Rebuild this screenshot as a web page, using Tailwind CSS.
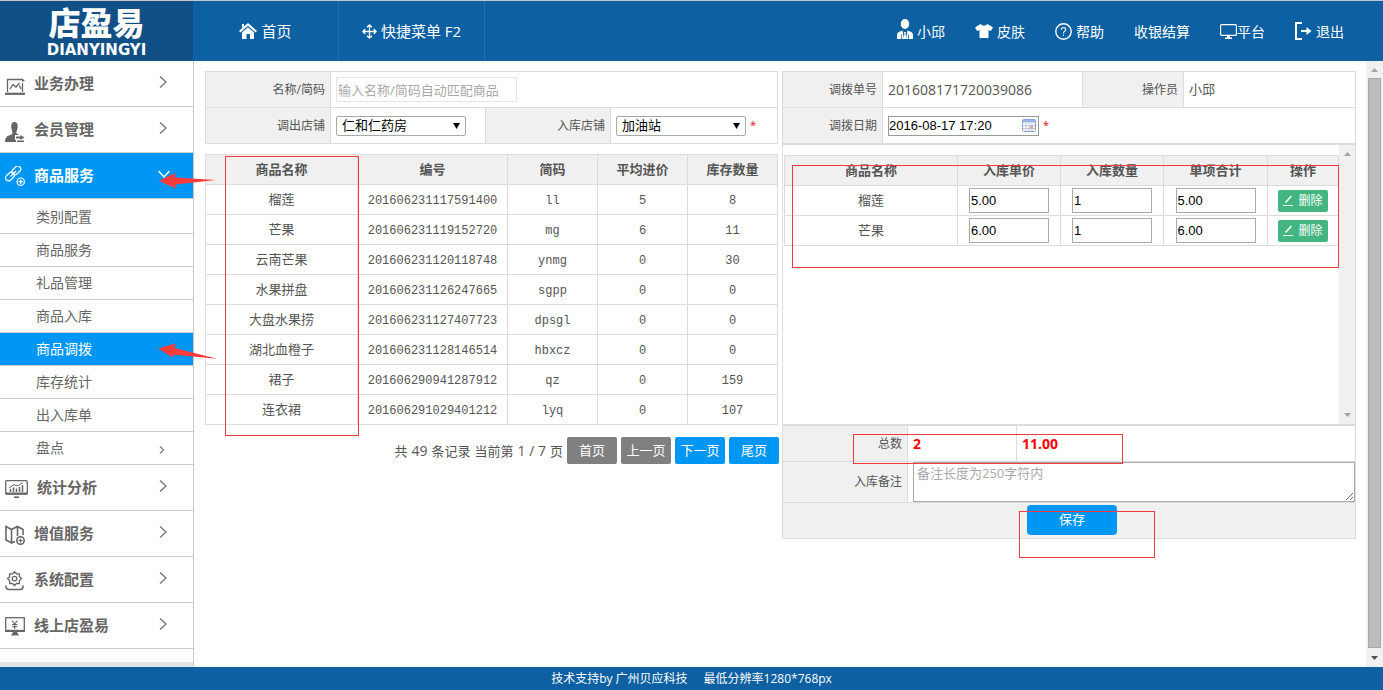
<!DOCTYPE html>
<html lang="zh-CN">
<head>
<meta charset="utf-8">
<title>店盈易 - 商品调拨</title>
<script src="https://cdn.jsdelivr.net/npm/@tailwindcss/browser@4"></script>
</head>
<body class="relative flex h-screen flex-col overflow-hidden bg-white font-['Open_Sans','Noto_Sans_CJK_SC',sans-serif] text-[13px] text-[#555]">

<header class="flex h-[61px] shrink-0 border-t border-[#c4c8cc] bg-[#0d60a1] text-white">
  <a href="#" class="flex w-[193px] shrink-0 flex-col items-center justify-between bg-[#105087] pt-1 pb-1">
    <span class="text-[32px] leading-[36px] font-black">店盈易</span>
    <span class="font-['DejaVu_Sans'] text-[15px] leading-[14px] font-bold">DIANYINGYI</span>
  </a>
  <nav class="flex text-[15px]">
    <a href="#" class="flex w-[146px] items-center justify-center gap-1 border-r border-[#2a70ad]">
      <svg class="h-[17px] w-[18px]" viewBox="0 0 18 17" fill="#fff"><path d="M9 0 L18 8 L16.6 9.4 L9 2.8 L1.4 9.4 L0 8 L3 5.3 V1 H5 V3.6 Z"/><path d="M9 4.2 L15 9.4 V16 H11 V11 H7.500 V16 H3 V9.400 Z"/></svg>
      <span>首页</span>
    </a>
    <a href="#" class="flex w-[146px] items-center justify-center gap-1 border-r border-[#2a70ad]">
      <svg class="size-[15px]" viewBox="0 0 15 15" fill="none" stroke="#fff" stroke-width="1.3"><path d="M7.500 1V14M1 7.500H14M5 3.300L7.500 .9L10 3.300M5 11.700L7.500 14.100L10 11.700M3.300 5L.9 7.500L3.300 10M11.700 5L14.100 7.500L11.700 10"/></svg>
      <span>快捷菜单 F2</span>
    </a>
  </nav>
  <nav class="ml-auto flex items-center gap-[30px] pr-[39px] text-[14px]">
    <a href="#" class="flex items-center gap-1">
      <svg class="mb-1 h-5 w-4" viewBox="0 0 16 20" fill="#fff"><ellipse cx="8" cy="5" rx="4.200" ry="5"/><path d="M0 20V16Q0 13.500 3 12.500L5.500 11.500L7 20ZM16 20V16Q16 13.500 13 12.500L10.500 11.500L9 20Z"/><path d="M7 13H9L8.600 14.500L9.300 20H6.700L7.400 14.500Z"/><path d="M4.600 15.500V20M11.400 15.500V20" stroke="#0d60a1" stroke-width=".8"/></svg>
      <span>小邱</span>
    </a>
    <a href="#" class="flex items-center gap-1">
      <svg class="h-[14px] w-[18px]" viewBox="0 0 18 14" fill="#fff"><path d="M5.500 0Q9 3.500 12.500 0L18 3.500L15.800 7L13.500 6V14H4.500V6L2.200 7L0 3.500Z"/></svg>
      <span>皮肤</span>
    </a>
    <a href="#" class="flex items-center gap-1">
      <svg class="size-[17px]" viewBox="0 0 17 17" fill="none" stroke="#fff"><circle cx="8.500" cy="8.500" r="7.700" stroke-width="1.400"/><path d="M6.300 6.800Q6.300 4.500 8.500 4.500T10.700 6.600Q10.700 7.800 9.500 8.400T8.500 10.300M8.500 11.600V12.900" stroke-width="1.100"/></svg>
      <span>帮助</span>
    </a>
    <a href="#">收银结算</a>
    <a href="#" class="flex items-center">
      <svg class="h-[15px] w-[17px]" viewBox="0 0 17 15"><rect x=".6" y=".6" width="15.800" height="10.800" rx="1" fill="none" stroke="#fff" stroke-width="1.200"/><path d="M7 12H10V13.500H12V15H5V13.500H7Z" fill="#fff"/></svg>
      <span>平台</span>
    </a>
    <a href="#" class="flex items-center gap-1">
      <svg class="h-[18px] w-[17px]" viewBox="0 0 17 18" fill="none" stroke="#fff" stroke-width="2"><path d="M7 1H1V17H7"/><path d="M6 9H15"/><path d="M11.500 5L16.500 9L11.500 13Z" fill="#fff" stroke="none"/></svg>
      <span>退出</span>
    </a>
  </nav>
</header>

<div class="flex min-h-0 flex-1">
  <aside class="flex w-[194px] shrink-0 flex-col border-r border-[#c8c8c8]">
    <nav class="text-[15px] font-bold text-[#666]">
      <a href="#" class="flex h-[46px] items-center gap-[9px] border-b border-[#ccc] pr-[26px] pl-[5px]">
        <svg class="mt-1 size-5 shrink-0" viewBox="0 0 20 20" fill="none" stroke="#666" stroke-width="1.300"><path d="M2.500 16V3.500H18M17.500 7V16"/><path d="M0 17.800H20" stroke-width="2.200"/><path d="M5 13L8 8.500L11 11L14.500 7M14.500 9.500L16 13"/><path d="M17 2.500L20 4.500L17 6Z" fill="#666" stroke="none"/></svg>
        <span>业务办理</span>
        <svg class="mb-1 ml-auto h-3 w-2" viewBox="0 0 8 12" fill="none" stroke="#777" stroke-width="1.400"><path d="M1 0.500L7 6L1 11.500"/></svg>
      </a>
      <a href="#" class="flex h-[46px] items-center gap-[9px] border-b border-[#ccc] pr-[26px] pl-[5px]">
        <svg class="mt-1 size-5 shrink-0" viewBox="0 0 20 20" fill="#666"><path d="M9.500 0C12 0 13 2 12.700 5C12.500 7.500 11.500 9 11.300 11Q12 12.300 15 13H10V18H11V20H0Q0 14.500 4 13.500Q7.200 12.500 7.500 11C7.300 9 6.500 7.500 6.200 5C6 2 7 0 9.500 0Z"/><path d="M11 14.500H15.500V13L19.500 15.500L15.500 18V16.500H11ZM12 18.500H19V20H12Z"/></svg>
        <span>会员管理</span>
        <svg class="mb-1 ml-auto h-3 w-2" viewBox="0 0 8 12" fill="none" stroke="#777" stroke-width="1.400"><path d="M1 0.500L7 6L1 11.500"/></svg>
      </a>
      <a href="#" class="flex h-[46px] items-center gap-[9px] border-b border-[#ccc] bg-[#0096f3] pr-[23px] pl-[5px] text-white">
        <svg class="size-5 shrink-0" viewBox="0 0 20 20" fill="none" stroke="#fff" stroke-width="1.200"><rect x="6.300" y="1.500" width="10" height="6" rx="3" transform="rotate(-45 11.300 4.500)"/><rect x="0" y="7.500" width="10" height="6" rx="3" transform="rotate(-45 5 10.500)"/><path d="M5.500 10.500L11 5"/><circle cx="15.700" cy="15.700" r="3.700"/><path d="M15.700 13.500V18M13.500 15.700H18"/></svg>
        <span>商品服务</span>
        <svg class="mb-1 ml-auto h-2 w-3" viewBox="0 0 12 8" fill="none" stroke="#fff" stroke-width="1.400"><path d="M0.500 1L6 7L11.500 1"/></svg>
      </a>
      <div class="pt-0.5 text-[14px] font-normal">
        <a href="#" class="flex h-[33px] items-center border-b border-[#ccc] pb-0.5 pl-9">类别配置</a>
        <a href="#" class="flex h-[33px] items-center border-b border-[#ccc] pb-0.5 pl-9">商品服务</a>
        <a href="#" class="flex h-[33px] items-center border-b border-[#ccc] pb-0.5 pl-9">礼品管理</a>
        <a href="#" class="flex h-[33px] items-center border-b border-[#ccc] pb-0.5 pl-9">商品入库</a>
        <a href="#" class="flex h-[33px] items-center border-b border-[#ccc] bg-[#0096f3] pb-0.5 pl-9 text-white">商品调拨</a>
        <a href="#" class="flex h-[33px] items-center border-b border-[#ccc] pb-0.5 pl-9">库存统计</a>
        <a href="#" class="flex h-[33px] items-center border-b border-[#ccc] pb-0.5 pl-9">出入库单</a>
        <a href="#" class="flex h-[33px] items-center justify-between border-b border-[#ccc] pr-7 pb-0.5 pl-9">盘点
          <svg class="mt-1.5 h-2 w-[6px]" viewBox="0 0 6 8" fill="none" stroke="#888" stroke-width="1.500"><path d="M1 0.500L4.500 4L1 7.500"/></svg>
        </a>
      </div>
      <a href="#" class="flex h-[46px] items-center gap-[9px] border-b border-[#ccc] pr-[26px] pl-[5px]">
        <svg class="mt-0.5 h-[18px] w-[23px] shrink-0" viewBox="0 0 23 18" fill="none" stroke="#666" stroke-width="1.300"><rect x=".7" y=".7" width="21.600" height="13.500" rx="1"/><path d="M1 13.500H22" stroke-width="2"/><path d="M9 17.200H14" stroke-width="1.600"/><path d="M5.500 12V9M8.500 12V7.500M11.500 12V8.500M14.500 12V7M17.500 12V5" stroke-width="1.500"/><path d="M4 8L9 4.500L12 6L18 2.800" stroke-width="1"/></svg>
        <span>统计分析</span>
        <svg class="mb-1 ml-auto h-3 w-2" viewBox="0 0 8 12" fill="none" stroke="#777" stroke-width="1.400"><path d="M1 0.500L7 6L1 11.500"/></svg>
      </a>
      <a href="#" class="flex h-[46px] items-center gap-[9px] border-b border-[#ccc] pr-[26px] pl-[5px]">
        <svg class="mt-0.5 size-5 shrink-0" viewBox="0 0 20 20" fill="none" stroke="#666" stroke-width="1.600"><path d="M1 1.500L6.500 4.500V18L1 15ZM6.500 4.500L12.500 1.500L18 4.500V10M12.500 1.500V11M6.500 18L10 16.500"/><circle cx="15.500" cy="15.500" r="3.700"/><path d="M15.500 13.500V17.500M13.500 15.500H17.500" stroke-width="1.200"/></svg>
        <span>增值服务</span>
        <svg class="mb-1 ml-auto h-3 w-2" viewBox="0 0 8 12" fill="none" stroke="#777" stroke-width="1.400"><path d="M1 0.500L7 6L1 11.500"/></svg>
      </a>
      <a href="#" class="flex h-[46px] items-center gap-[9px] border-b border-[#ccc] pr-[26px] pl-[5px]">
        <svg class="mt-0.5 size-5 shrink-0" viewBox="0 0 20 20" fill="none" stroke="#666" stroke-width="1.300"><path d="M9.500 .8L11.500 2.800L14.400 2.800L14.400 5.600L16.500 7.600L14.400 9.600V12.500H11.500L9.500 14.500L7.500 12.500H4.600V9.600L2.500 7.600L4.600 5.600V2.800H7.500Z"/><circle cx="9.500" cy="7.600" r="2.300"/><path d="M.8 14.500Q1 18.500 4 18.500H15Q18 18.500 18.200 14.500" stroke-width="1.600"/></svg>
        <span>系统配置</span>
        <svg class="mb-1 ml-auto h-3 w-2" viewBox="0 0 8 12" fill="none" stroke="#777" stroke-width="1.400"><path d="M1 0.500L7 6L1 11.500"/></svg>
      </a>
      <a href="#" class="flex h-[46px] items-center gap-[9px] border-b border-[#ccc] pr-[26px] pl-[5px]">
        <svg class="mt-0.5 h-[19px] w-5 shrink-0" viewBox="0 0 20 19" fill="none" stroke="#666" stroke-width="1.300"><rect x=".7" y=".7" width="18.600" height="13.600"/><path d="M1 13.800H19" stroke-width="2"/><path d="M8 15H12L14 18.500H6Z" fill="#666" stroke="none"/><path d="M7 3.500L9.700 7L12.400 3.500M9.700 7V12M7 7.500H12.400M7 9.700H12.400" stroke-width="1.100"/></svg>
        <span>线上店盈易</span>
        <svg class="mb-1 ml-auto h-3 w-2" viewBox="0 0 8 12" fill="none" stroke="#777" stroke-width="1.400"><path d="M1 0.500L7 6L1 11.500"/></svg>
      </a>
    </nav>
    <div class="mt-auto h-[5px] bg-[#e4e4e4]"></div>
  </aside>

  <main class="grid min-w-0 flex-1 grid-cols-2 content-start gap-[3px] pt-[10px] pr-[10px] pl-[11px]">
    <section>
      <div class="pr-px">
      <table class="w-full table-fixed border-collapse [&_td]:h-9 [&_td]:border [&_td]:border-[#dcdcdc] [&_td]:px-[5px] [&_th]:h-9 [&_th]:border [&_th]:border-[#dcdcdc] [&_th]:bg-[#f0f0f0] [&_th]:px-[5px] [&_th]:text-right [&_th]:text-[12px] [&_th]:font-normal">
        <colgroup><col class="w-[125px]"><col class="w-[155px]"><col class="w-[125px]"><col></colgroup>
        <tr>
          <th><label for="kw">名称/简码</label></th>
          <td colspan="3"><input id="kw" type="text" placeholder="输入名称/简码自动匹配商品" class="block h-[25px] w-[181px] border border-[#e5e5e5] px-px placeholder:text-[#a9a9a9]"></td>
        </tr>
        <tr>
          <th><label for="from">调出店铺</label></th>
          <td>
            <div class="grid w-[130px] items-center">
              <select id="from" class="col-start-1 row-start-1 h-5 w-full appearance-none rounded-[2px] border border-[#a9a9a9] bg-white pb-px pl-[5px] text-[13px] leading-[17px] text-black"><option>仁和仁药房</option></select>
              <svg class="pointer-events-none col-start-1 row-start-1 mr-1.5 h-1.5 w-[7px] justify-self-end" viewBox="0 0 7 6"><path d="M0 0H7L3.500 6Z" fill="#000"/></svg>
            </div>
          </td>
          <th><label for="to">入库店铺</label></th>
          <td>
            <div class="flex items-center gap-1">
              <div class="grid w-[130px] items-center">
                <select id="to" class="col-start-1 row-start-1 h-5 w-full appearance-none rounded-[2px] border border-[#a9a9a9] bg-white pb-px pl-[5px] text-[13px] leading-[17px] text-black"><option>加油站</option></select>
                <svg class="pointer-events-none col-start-1 row-start-1 mr-1.5 h-1.5 w-[7px] justify-self-end" viewBox="0 0 7 6"><path d="M0 0H7L3.500 6Z" fill="#000"/></svg>
              </div>
              <span class="text-[11px] text-red-600">*</span>
            </div>
          </td>
        </tr>
      </table>

      <table class="mt-[10px] w-full table-fixed border-collapse text-center [&_td]:h-[30px] [&_td]:border [&_td]:border-[#dcdcdc] [&_td]:pt-0.5 [&_td]:font-['Liberation_Mono','Noto_Sans_CJK_SC',monospace] [&_td]:text-[12px] [&_td:first-child]:text-[13px] [&_th]:h-[30px] [&_th]:border [&_th]:border-[#dcdcdc] [&_th]:bg-[#f0f0f0] [&_th]:font-bold">
        <colgroup><col><col class="w-[150px]"><col class="w-[90px]"><col class="w-[90px]"><col class="w-[90px]"></colgroup>
        <thead><tr><th>商品名称</th><th>编号</th><th>简码</th><th>平均进价</th><th>库存数量</th></tr></thead>
        <tbody>
          <tr><td>榴莲</td><td>201606231117591400</td><td>ll</td><td>5</td><td>8</td></tr>
          <tr><td>芒果</td><td>201606231119152720</td><td>mg</td><td>6</td><td>11</td></tr>
          <tr><td>云南芒果</td><td>201606231120118748</td><td>ynmg</td><td>0</td><td>30</td></tr>
          <tr><td>水果拼盘</td><td>201606231126247665</td><td>sgpp</td><td>0</td><td>0</td></tr>
          <tr><td>大盘水果捞</td><td>201606231127407723</td><td>dpsgl</td><td>0</td><td>0</td></tr>
          <tr><td>湖北血橙子</td><td>201606231128146514</td><td>hbxcz</td><td>0</td><td>0</td></tr>
          <tr><td>裙子</td><td>201606290941287912</td><td>qz</td><td>0</td><td>159</td></tr>
          <tr><td>连衣裙</td><td>201606291029401212</td><td>lyq</td><td>0</td><td>107</td></tr>
        </tbody>
      </table>
      </div>

      <div class="mt-3 flex items-center justify-end gap-1 text-white">
        <div class="flex items-baseline gap-1 text-[#555]"><span>共</span><span class="text-[14px]">49</span><span>条记录</span><span>当前第</span><span class="text-[14px]">1 / 7</span><span>页</span></div>
        <button type="button" class="h-[27px] w-[50px] rounded-[2px] bg-[#808080]">首页</button>
        <button type="button" class="h-[27px] w-[50px] rounded-[2px] bg-[#808080]">上一页</button>
        <button type="button" class="h-[27px] w-[50px] rounded-[2px] bg-[#0096f3]">下一页</button>
        <button type="button" class="h-[27px] w-[50px] rounded-[2px] bg-[#0096f3]">尾页</button>
      </div>
    </section>

    <section>
      <table class="w-full table-fixed border-collapse [&_td]:h-9 [&_td]:border [&_td]:border-[#dcdcdc] [&_td]:px-[5px] [&_th]:h-9 [&_th]:border [&_th]:border-[#dcdcdc] [&_th]:bg-[#f0f0f0] [&_th]:px-[5px] [&_th]:text-right [&_th]:text-[12px] [&_th]:font-normal">
        <colgroup><col class="w-[100px]"><col class="w-[200px]"><col class="w-[101px]"><col></colgroup>
        <tr><th>调拨单号</th><td class="text-[14px]">201608171720039086</td><th>操作员</th><td>小邱</td></tr>
        <tr>
          <th><label for="date">调拨日期</label></th>
          <td colspan="3">
            <div class="flex items-center gap-1">
              <div class="grid w-[151px] items-center">
                <input id="date" type="text" value="2016-08-17 17:20" class="col-start-1 row-start-1 h-5 w-full border border-[#999] font-['Liberation_Sans',sans-serif] text-black">
                <svg class="pointer-events-none col-start-1 row-start-1 mr-[3px] h-[13px] w-[14px] justify-self-end" viewBox="0 0 14 13"><rect x=".5" y=".5" width="13" height="12" rx="1" fill="#fff" stroke="#8ba4d4"/><path d="M1 1H13V3.500H1Z" fill="#9db5dc"/><path d="M1 6.500H13M1 9.500H13M4 4V12M7 4V12M10 4V12" stroke="#b9c7e4" stroke-width="1"/><path d="M8 7H11V10H8Z" fill="#e9a08c"/></svg>
              </div>
              <span class="text-[11px] text-red-600">*</span>
            </div>
          </td>
        </tr>
      </table>

      <div class="flex h-[281px] border border-[#dcdcdc]">
        <div class="min-w-0 flex-1 pt-[10px] pl-px">
          <table class="w-full table-fixed border-collapse text-center [&_input]:h-[25px] [&_input]:w-20 [&_input]:border [&_input]:border-[#a9a9a9] [&_input]:px-px [&_input]:font-['Liberation_Sans',sans-serif] [&_input]:text-black [&_td]:h-[30px] [&_td]:border [&_td]:border-[#dcdcdc] [&_th]:h-[30px] [&_th]:border [&_th]:border-[#dcdcdc] [&_th]:bg-[#f0f0f0] [&_th]:font-bold">
            <colgroup><col><col class="w-[103px]"><col class="w-[103px]"><col class="w-[104px]"><col class="w-[71px]"></colgroup>
            <thead><tr><th>商品名称</th><th>入库单价</th><th>入库数量</th><th>单项合计</th><th>操作</th></tr></thead>
            <tbody>
              <tr>
                <td>榴莲</td>
                <td><input type="text" aria-label="入库单价" value="5.00"></td>
                <td><input type="text" aria-label="入库数量" value="1"></td>
                <td><input type="text" aria-label="单项合计" value="5.00"></td>
                <td><button type="button" class="mx-auto flex h-[22px] w-[50px] items-center justify-center gap-[5px] rounded-[2px] bg-[#43b580] text-[12px] text-white"><svg class="h-[11px] w-[10px]" viewBox="0 0 10 11" fill="none" stroke="#fff"><path d="M0 10.500H10"/><path d="M2.500 7.500L8.500 1" stroke-width="1.600"/></svg>删除</button></td>
              </tr>
              <tr>
                <td>芒果</td>
                <td><input type="text" aria-label="入库单价" value="6.00"></td>
                <td><input type="text" aria-label="入库数量" value="1"></td>
                <td><input type="text" aria-label="单项合计" value="6.00"></td>
                <td><button type="button" class="mx-auto flex h-[22px] w-[50px] items-center justify-center gap-[5px] rounded-[2px] bg-[#43b580] text-[12px] text-white"><svg class="h-[11px] w-[10px]" viewBox="0 0 10 11" fill="none" stroke="#fff"><path d="M0 10.500H10"/><path d="M2.500 7.500L8.500 1" stroke-width="1.600"/></svg>删除</button></td>
              </tr>
            </tbody>
          </table>
        </div>
        <div class="flex w-4 shrink-0 flex-col items-center justify-between bg-[#f0f0f0] py-[7px]">
          <svg class="h-1 w-[7px]" viewBox="0 0 7 4"><path d="M0 4H7L3.500 0Z" fill="#a3a3a3"/></svg>
          <svg class="h-1 w-[7px]" viewBox="0 0 7 4"><path d="M0 0H7L3.500 4Z" fill="#a3a3a3"/></svg>
        </div>
      </div>

      <table class="w-full table-fixed border-collapse [&_td]:border [&_td]:border-[#dcdcdc] [&_th]:border [&_th]:border-[#dcdcdc] [&_th]:bg-[#f0f0f0] [&_th]:px-[5px] [&_th]:text-right [&_th]:text-[12px] [&_th]:font-normal">
        <colgroup><col class="w-[125px]"><col class="w-[109px]"><col></colgroup>
        <tr class="h-9 text-[14px] font-bold text-[#f00]"><th class="text-[#555]">总数</th><td class="px-[5px]">2</td><td class="px-[5px]">11.00</td></tr>
        <tr class="h-[41px]">
          <th><label for="note">入库备注</label></th>
          <td colspan="2" class="pl-[5px]"><textarea id="note" placeholder="备注长度为250字符内" class="block h-10 w-full border border-[#a9a9a9] px-[3px] leading-5 placeholder:text-[#a9a9a9]"></textarea></td>
        </tr>
        <tr class="h-9"><td colspan="3" class="bg-[#f0f0f0] pb-px pl-[6px]"><button type="button" class="mx-auto block h-[30px] w-[90px] rounded-[4px] bg-[#0096f3] text-white">保存</button></td></tr>
      </table>
    </section>
  </main>

  <div class="flex w-[17px] shrink-0 flex-col items-center bg-[#f0f0f0] py-[7px]">
    <svg class="h-1 w-[7px] shrink-0" viewBox="0 0 7 4"><path d="M0 4H7L3.500 0Z" fill="#a3a3a3"/></svg>
    <div class="mt-[6px] mb-2 w-[13px] flex-1 border border-[#a8a8a8] bg-[#bcbcbc]"></div>
    <svg class="h-1 w-[7px] shrink-0" viewBox="0 0 7 4"><path d="M0 0H7L3.500 4Z" fill="#505050"/></svg>
  </div>
</div>

<footer class="flex h-[23px] shrink-0 items-center justify-center gap-4 bg-[#0d60a1] text-[12px] text-white">
  <span>技术支持by 广州贝应科技</span><span>最低分辨率1280*768px</span>
</footer>

<!-- Callouts drawn over the page -->
<div class="pointer-events-none absolute top-[156px] left-[225px] h-[280px] w-[134px] border border-[#f03c3c]"></div>
<div class="pointer-events-none absolute top-[165px] left-[792px] h-[103px] w-[547px] border border-[#f03c3c]"></div>
<div class="pointer-events-none absolute top-[434px] left-[853px] h-[30px] w-[270px] border border-[#f03c3c]"></div>
<div class="pointer-events-none absolute top-[511px] left-[1019px] h-[47px] w-[136px] border border-[#f03c3c]"></div>
<svg class="pointer-events-none absolute top-[170px] left-[158px] h-5 w-[60px]" viewBox="0 0 60 20"><path d="M1 10.700L17 3L17 7.500L58 10L17.500 14.500L17.500 18.500Z" fill="#ff3b3b"/></svg>
<svg class="pointer-events-none absolute top-[340px] left-[158px] h-5 w-[60px]" viewBox="0 0 60 20"><path d="M0 8.500L17.500 3.500L16.500 8L59 18.700L15.500 14.700L15 17.500Z" fill="#ff3b3b"/></svg>
</body>
</html>
